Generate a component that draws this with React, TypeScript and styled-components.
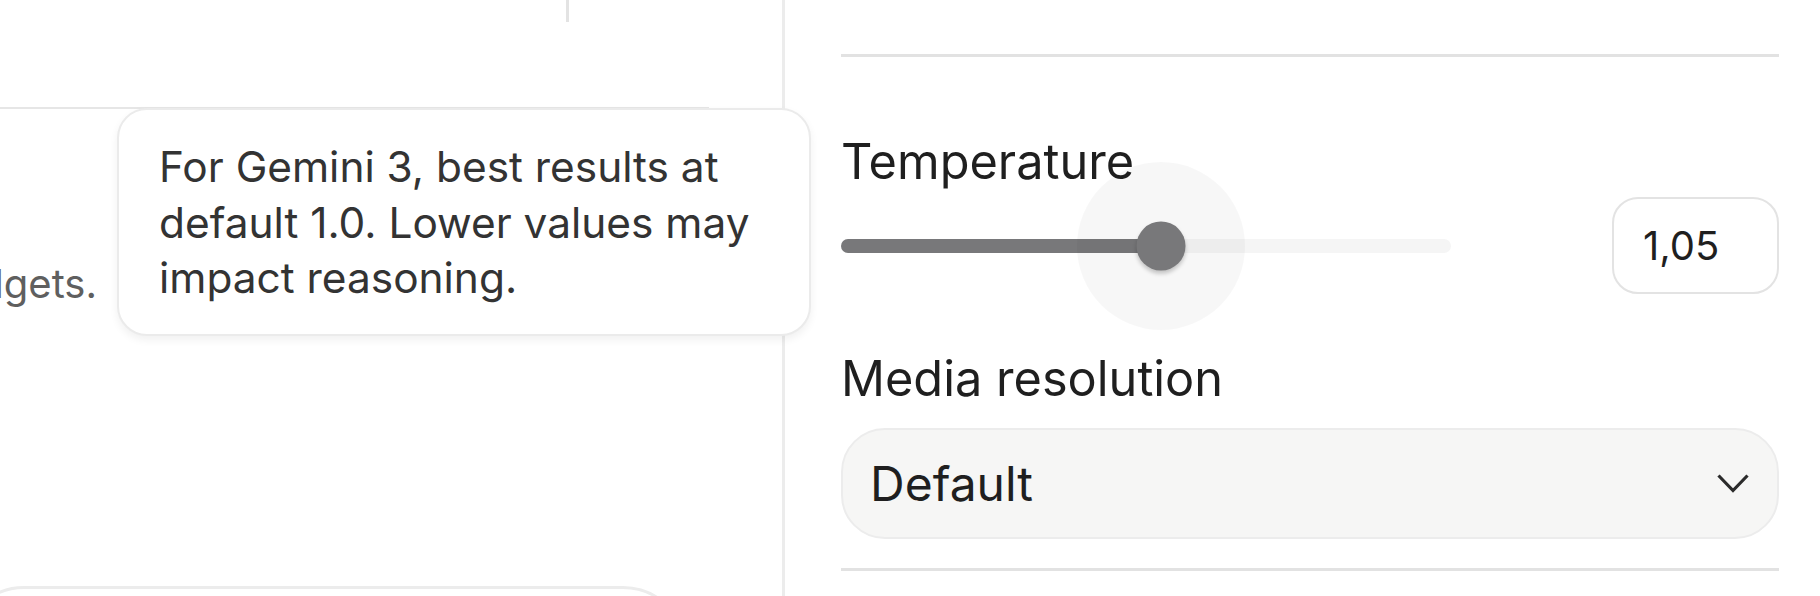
import React from "react";
import styled, { createGlobalStyle } from "styled-components";

const Global = createGlobalStyle`
  html, body { margin: 0; padding: 0; background: #ffffff; }
  body { font-family: Inter, "Noto Sans", sans-serif; }
  * { box-sizing: border-box; }
`;

const Page = styled.div`
  width: 1820px;
  height: 596px;
  overflow: hidden;
  display: flex;
  background: #ffffff;
`;

const LeftPanel = styled.div`
  position: relative;
  width: 785px;
  flex: none;
  border-right: 3px solid #ececec;
  display: flex;
  flex-direction: column;
`;

const TopStrip = styled.div`
  height: 22px;
  flex: none;
  display: flex;
`;

const StripDivider = styled.div`
  margin-left: 566px;
  width: 3px;
  height: 100%;
  background: #e3e3e3;
`;

const Card = styled.section`
  margin-top: 85px;
  width: 709px;
  height: 479px;
  flex: none;
  border-top: 2px solid #e6e6e6;
  padding-top: 150px;
`;

const Desc = styled.p`
  margin: 0;
  width: 97px;
  display: flex;
  justify-content: flex-end;
  white-space: nowrap;
  font-size: 40px;
  line-height: 50px;
  color: #5f5f5f;
`;

const BottomBox = styled.div`
  margin-left: -40px;
  width: 727px;
  height: 140px;
  flex: none;
  border: 3px solid #ececec;
  border-radius: 64px;
`;

const Tooltip = styled.div`
  position: absolute;
  left: 117px;
  top: 108px;
  width: 694px;
  padding: 29px 40px 28px 40px;
  background: #ffffff;
  border: 2px solid #ebebeb;
  border-radius: 30px;
  box-shadow: 0 4px 8px rgba(0, 0, 0, 0.06);
  font-size: 42.4px;
  line-height: 55.7px;
  color: #333333;
`;

const RightPanel = styled.div`
  flex: 1;
  padding: 0 41px 0 56px;
  display: flex;
  flex-direction: column;
`;

const Rule = styled.div<{ $top: number }>`
  margin-top: ${(p) => p.$top}px;
  height: 3px;
  background: #e2e2e2;
  flex: none;
`;

const Label = styled.div<{ $top: number }>`
  margin-top: ${(p) => p.$top}px;
  flex: none;
  font-size: 48.7px;
  line-height: 60px;
  color: #1f1f1f;
`;

const SliderRow = styled.div`
  margin-top: 5px;
  height: 97px;
  flex: none;
  display: flex;
  align-items: center;
  justify-content: space-between;
`;

const Track = styled.div`
  position: relative;
  width: 610px;
  height: 14px;
  border-radius: 7px;
  background: #f5f5f5;
`;

const Fill = styled.div`
  height: 100%;
  border-radius: 7px;
  background: #78787a;
`;

const Halo = styled.div`
  position: absolute;
  top: 50%;
  width: 168px;
  height: 168px;
  border-radius: 50%;
  background: rgba(0, 0, 0, 0.03);
  transform: translate(-50%, -50%);
`;

const Thumb = styled.div`
  position: absolute;
  top: 50%;
  width: 49px;
  height: 49px;
  border-radius: 50%;
  background: #78787a;
  box-shadow: 0 3px 4px rgba(0, 0, 0, 0.22);
  transform: translate(-50%, -50%);
`;

const NumberBox = styled.div`
  width: 167px;
  height: 97px;
  border: 2px solid #e3e3e3;
  border-radius: 26px;
  padding-left: 29px;
  display: flex;
  align-items: center;
  font-size: 40px;
  color: #1f1f1f;
`;

const Select = styled.div`
  margin-top: 19px;
  height: 111px;
  flex: none;
  border: 2px solid #ececec;
  border-radius: 44px;
  background: #f6f6f5;
  padding: 0 28px 0 27px;
  display: flex;
  align-items: center;
  justify-content: space-between;
  font-size: 48px;
  color: #1f1f1f;
`;

const Chevron = () => (
  <svg width="32" height="19" viewBox="0 0 32 19" fill="none">
    <polyline points="1.5,1.5 16,16.5 30.5,1.5" stroke="#2b2b2b" strokeWidth="3.2" />
  </svg>
);

export default function App() {
  const value = 1.05;
  const pct = (value / 2) * 100;
  return (
    <>
      <Global />
      <Page>
        <LeftPanel>
          <TopStrip>
            <StripDivider />
          </TopStrip>
          <Card>
            <Desc>Configure tools and widgets.</Desc>
          </Card>
          <BottomBox />
          <Tooltip>
            For Gemini 3, best results at default 1.0. Lower values may impact reasoning.
          </Tooltip>
        </LeftPanel>
        <RightPanel>
          <Rule $top={54} />
          <Label $top={75}>Temperature</Label>
          <SliderRow>
            <Track>
              <Halo style={{ left: `${pct}%` }} />
              <Fill style={{ width: `${pct}%` }} />
              <Thumb style={{ left: `${pct}%` }} />
            </Track>
            <NumberBox>1,05</NumberBox>
          </SliderRow>
          <Label $top={55}>Media resolution</Label>
          <Select>
            <span>Default</span>
            <Chevron />
          </Select>
          <Rule $top={29} />
        </RightPanel>
      </Page>
    </>
  );
}
